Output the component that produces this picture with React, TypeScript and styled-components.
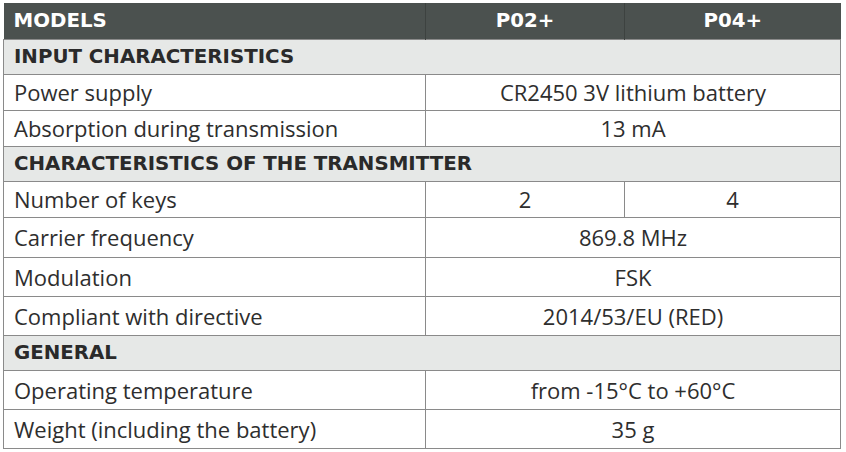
import React from "react";
import styled, { createGlobalStyle } from "styled-components";

const GlobalStyle = createGlobalStyle`
  body {
    margin: 0;
    background: #ffffff;
    font-family: "Open Sans", "Liberation Sans", Arial, sans-serif;
  }
`;

const Page = styled.div`
  padding: 3px 0 0 3px;
`;

const Table = styled.table`
  width: 837px;
  border-collapse: collapse;
  table-layout: fixed;
  color: #2e2e2e;
  font-size: 22px;
`;

const HeadRow = styled.tr`
  height: 36px;
  background: #4b514f;
`;

const HeadCell = styled.th<{ $align?: string }>`
  color: #ffffff;
  font-family: "DejaVu Sans", "Liberation Sans", sans-serif;
  font-weight: 700;
  font-size: 19.8px;
  text-align: ${(p) => p.$align || "center"};
  padding: 0 10px;
  border-left: 1px solid #3d4240;
  &:first-child {
    border-left: none;
  }
`;

const SectionRow = styled.tr`
  height: 35px;
  background: #e6e8e7;
`;

const SectionCell = styled.td`
  font-family: "DejaVu Sans", "Liberation Sans", sans-serif;
  font-weight: 700;
  font-size: 19.8px;
  padding: 0 10px;
  border: 1px solid #8a8a8a;
  color: #2a2a2a;
`;

const Row = styled.tr<{ $h: number }>`
  height: ${(p) => p.$h}px;
  background: #ffffff;
`;

const LabelCell = styled.td`
  padding: 0 10px;
  border: 1px solid #8a8a8a;
  white-space: nowrap;
`;

const ValueCell = styled.td`
  text-align: center;
  border: 1px solid #8a8a8a;
  white-space: nowrap;
`;

type Line =
  | { kind: "section"; title: string }
  | { kind: "row"; label: string; values: string[]; h: number };

const lines: Line[] = [
  { kind: "section", title: "INPUT CHARACTERISTICS" },
  { kind: "row", label: "Power supply", values: ["CR2450 3V lithium battery"], h: 36 },
  { kind: "row", label: "Absorption during transmission", values: ["13 mA"], h: 36 },
  { kind: "section", title: "CHARACTERISTICS OF THE TRANSMITTER" },
  { kind: "row", label: "Number of keys", values: ["2", "4"], h: 36 },
  { kind: "row", label: "Carrier frequency", values: ["869.8 MHz"], h: 40 },
  { kind: "row", label: "Modulation", values: ["FSK"], h: 39 },
  { kind: "row", label: "Compliant with directive", values: ["2014/53/EU (RED)"], h: 39 },
  { kind: "section", title: "GENERAL" },
  { kind: "row", label: "Operating temperature", values: ["from -15°C to +60°C"], h: 39 },
  { kind: "row", label: "Weight (including the battery)", values: ["35 g"], h: 39 },
];

const App = () => {
  return (
    <Page>
      <GlobalStyle />
      <Table>
        <colgroup>
          <col style={{ width: 422 }} />
          <col style={{ width: 199 }} />
          <col style={{ width: 216 }} />
        </colgroup>
        <thead>
          <HeadRow>
            <HeadCell $align="left">MODELS</HeadCell>
            <HeadCell>P02+</HeadCell>
            <HeadCell>P04+</HeadCell>
          </HeadRow>
        </thead>
        <tbody>
          {lines.map((line, index) =>
            line.kind === "section" ? (
              <SectionRow key={index}>
                <SectionCell colSpan={3}>{line.title}</SectionCell>
              </SectionRow>
            ) : (
              <Row key={index} $h={line.h}>
                <LabelCell>{line.label}</LabelCell>
                {line.values.length === 1 ? (
                  <ValueCell colSpan={2}>{line.values[0]}</ValueCell>
                ) : (
                  line.values.map((v) => <ValueCell key={v}>{v}</ValueCell>)
                )}
              </Row>
            )
          )}
        </tbody>
      </Table>
    </Page>
  );
};

export default App;
